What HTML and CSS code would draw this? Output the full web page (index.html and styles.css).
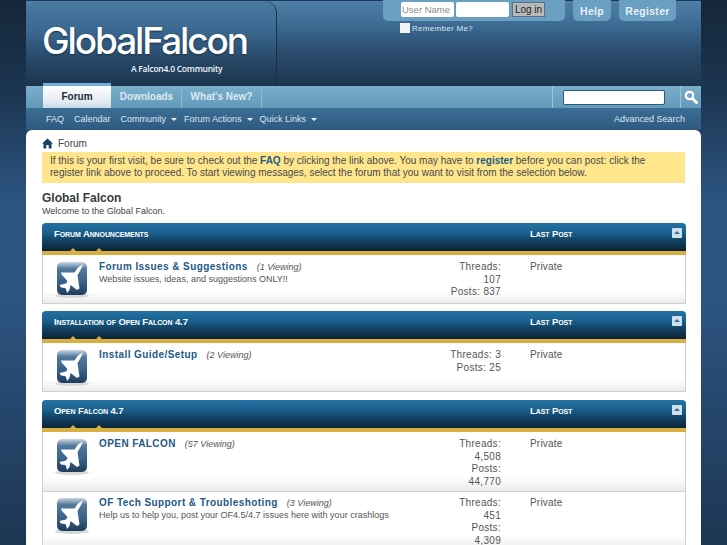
FILE: index.html
```html
<!DOCTYPE html>
<html lang="en">
<head>
    <meta charset="UTF-8">
    <title>Global Falcon</title>
    <link rel="stylesheet" href="styles.css">
</head>
<body>

<svg class="sprites" width="0" height="0">
    <defs>
        <linearGradient id="iconFill" x1="0" y1="0" x2="0" y2="1">
            <stop offset="0" stop-color="#c9d6e2"/>
            <stop offset="0.2" stop-color="#55799c"/>
            <stop offset="0.6" stop-color="#3a6288"/>
            <stop offset="1" stop-color="#1d3c5c"/>
        </linearGradient>
        <symbol id="planeIcon" viewBox="0 0 36 42">
            <ellipse cx="18" cy="37.500" rx="17" ry="2.500" fill="#d8d8d8"/>
            <rect x="3" y="4" width="30" height="33" rx="5" fill="url(#iconFill)"/>
            <path d="M29 6.500 L24 9.500 L20.500 14.500 L7 14.500 L8 17 L13.500 23 L12 25.500 L5.500 27 L7 29.500 L11 30 L12 31 L13 35 L15.500 32 L16.500 27 L23 32 L25.500 30.500 L23.500 17 L26.500 12 Z" fill="#fff"/>
        </symbol>
    </defs>
</svg>

<div class="wrapper">
    <!-- Kopf -->
    <div class="header">
        <div class="logo">
            <div class="logo-name">GlobalFalcon</div>
            <div class="logo-tag">A Falcon4.0 Community</div>
        </div>
        <div class="toplinks">
            <div class="login-box">
                <form class="login-row">
                    <input type="text" class="login-input" placeholder="User Name">
                    <input type="text" class="login-input">
                    <button type="button" class="login-btn">Log in</button>
                </form>
                <label class="remember"><span class="check"></span>Remember Me?</label>
            </div>
            <a class="top-btn top-help">Help</a>
            <a class="top-btn top-register">Register</a>
        </div>
    </div>

    <!-- Navigation -->
    <div class="navbar">
        <ul class="tabs">
            <li class="tab active">Forum</li>
            <li class="tab">Downloads</li>
            <li class="tab">What's New?</li>
        </ul>
        <div class="search">
            <input type="text" class="search-input">
            <div class="search-btn">
                <svg width="14" height="14" viewBox="0 0 14 14">
                    <circle cx="5.500" cy="5.500" r="3.700" fill="none" stroke="#fff" stroke-width="2.200"/>
                    <path d="M8.500 8.500 L12.500 12.500" stroke="#fff" stroke-width="3" stroke-linecap="round"/>
                </svg>
            </div>
        </div>
    </div>
    <div class="subnav">
        <ul class="sublinks">
            <li>FAQ</li>
            <li>Calendar</li>
            <li class="drop">Community</li>
            <li class="drop">Forum Actions</li>
            <li class="drop">Quick Links</li>
        </ul>
        <a class="adv-search">Advanced Search</a>
    </div>

    <!-- Inhalt -->
    <div class="content">
        <div class="breadcrumb">
            <svg width="11" height="11" viewBox="0 0 11 11">
                <path d="M5.500 0.500 L11 5.500 L9.500 5.500 L9.500 10.500 L6.700 10.500 L6.700 7 L4.300 7 L4.300 10.500 L1.500 10.500 L1.500 5.500 L0 5.500 Z" fill="#1f3f5f"/>
            </svg>
            <span>Forum</span>
        </div>
        <div class="notice">
            If this is your first visit, be sure to check out the <b>FAQ</b> by clicking the link above. You may have to <b>register</b> before you can post: click the register link above to proceed. To start viewing messages, select the forum that you want to visit from the selection below.
        </div>
        <h1 class="site-title">Global Falcon</h1>
        <p class="site-desc">Welcome to the Global Falcon.</p>

        <div class="block">
            <div class="block-head">
                <span class="head-title">Forum Announcements</span>
                <span class="head-last">Last Post</span>
                <span class="collapse"></span>
            </div>
            <div class="forum-row">
                <svg class="forum-icon"><use href="#planeIcon"/></svg>
                <div class="forum-info">
                    <div><a class="forum-name">Forum Issues &amp; Suggestions</a><em class="viewing">(1 Viewing)</em></div>
                    <p class="forum-desc">Website issues, ideas, and suggestions ONLY!!</p>
                </div>
                <div class="forum-stats">Threads: 107<br>Posts: 837</div>
                <div class="forum-last">Private</div>
            </div>
        </div>

        <div class="block">
            <div class="block-head">
                <span class="head-title">Installation of Open Falcon 4.7</span>
                <span class="head-last">Last Post</span>
                <span class="collapse"></span>
            </div>
            <div class="forum-row">
                <svg class="forum-icon"><use href="#planeIcon"/></svg>
                <div class="forum-info">
                    <div><a class="forum-name">Install Guide/Setup</a><em class="viewing">(2 Viewing)</em></div>
                </div>
                <div class="forum-stats">Threads: 3<br>Posts: 25</div>
                <div class="forum-last">Private</div>
            </div>
        </div>

        <div class="block">
            <div class="block-head">
                <span class="head-title">Open Falcon 4.7</span>
                <span class="head-last">Last Post</span>
                <span class="collapse"></span>
            </div>
            <div class="forum-row">
                <svg class="forum-icon"><use href="#planeIcon"/></svg>
                <div class="forum-info">
                    <div><a class="forum-name">OPEN FALCON</a><em class="viewing">(57 Viewing)</em></div>
                </div>
                <div class="forum-stats">Threads: 4,508<br>Posts: 44,770</div>
                <div class="forum-last">Private</div>
            </div>
            <div class="forum-row">
                <svg class="forum-icon"><use href="#planeIcon"/></svg>
                <div class="forum-info">
                    <div><a class="forum-name">OF Tech Support &amp; Troubleshoting</a><em class="viewing">(3 Viewing)</em></div>
                    <p class="forum-desc">Help us to help you, post your OF4.5/4.7 issues here with your crashlogs</p>
                </div>
                <div class="forum-stats">Threads: 451<br>Posts: 4,309</div>
                <div class="forum-last">Private</div>
            </div>
        </div>
    </div>
</div>

</body>
</html>
```

FILE: styles.css
```css
html, body {
    height: 100%;
    overflow: hidden;
}
body {
    margin: 0;
    padding: 0;
    font-family: 'Liberation Sans', Arial, sans-serif;
    font-size: 10px;
    color: #4a4a4a;
    background: linear-gradient(to bottom, #14263a 0, #1c3550 90px, #2c5481 200px, #2c5481 300px, #1d3652 545px);
}
ul {
    list-style: none;
    margin: 0;
    padding: 0;
}
.sprites {
    position: absolute;
}
.wrapper {
    width: 675px;
    margin-left: 26px;
}

/* Kopf */
.header {
    height: 86px;
    box-sizing: border-box;
    display: flex;
    border-top: 1px solid #1c3a58;
    background: linear-gradient(to bottom, #4f7ea8 0, #3c6a92 25px, #2a4c6e 50px, #1d3650 85px);
}
.logo {
    width: 251px;
    height: 85px;
    box-sizing: border-box;
    padding: 21px 0 0 16px;
    border-radius: 12px 12px 0 0;
    border-right: 1px solid #1a2f45;
    background: linear-gradient(to bottom, #4a7aa3 0, #3b6890 30px, #264766 60px, #1c344e 85px);
}
.logo-name {
    font-family: Inter, sans-serif;
    font-weight: 500;
    font-size: 37px;
    line-height: 38px;
    letter-spacing: -2.100px;
    white-space: nowrap;
    color: #fff;
    text-shadow: 0 1px 2px #1a3048;
}
.logo-tag {
    margin: 3px 0 0 89px;
    font-family: 'Open Sans', sans-serif;
    font-weight: 600;
    font-size: 8.500px;
    line-height: 12px;
    letter-spacing: -0.25px;
    white-space: nowrap;
    color: #f2f6fa;
}
.toplinks {
    display: flex;
    align-items: flex-start;
    margin-left: 106px;
    margin-top: -1px;
}
.login-box {
    position: relative;
    width: 182px;
    height: 21px;
    background: #6a9fc2;
    border-radius: 0 0 5px 5px;
}
.login-row {
    display: flex;
    padding: 2px 0 0 18px;
    margin: 0;
}
.login-input {
    width: 53px;
    height: 15px;
    box-sizing: border-box;
    margin: 0 2px 0 0;
    padding: 0 1px;
    border: 0;
    border-radius: 2px;
    background: #fff;
    font-family: 'Liberation Sans', Arial, sans-serif;
    font-size: 9.500px;
}
.login-input::placeholder {
    color: #8a8a8a;
}
.login-btn {
    width: 33px;
    height: 15px;
    margin-left: 1px;
    padding: 0;
    border: 1px solid #55718a;
    background: #b9b9b9;
    font-family: 'Liberation Sans', Arial, sans-serif;
    font-size: 10px;
    color: #222;
}
.remember {
    position: absolute;
    left: 17px;
    top: 23px;
    display: flex;
    align-items: center;
    font-size: 8px;
    letter-spacing: 0.3px;
    color: #dbe6ef;
    white-space: nowrap;
}
.check {
    width: 10px;
    height: 10px;
    margin-right: 2px;
    background: #f2f2f2;
}
.top-btn {
    height: 21px;
    box-sizing: border-box;
    padding-top: 5px;
    background: #6a9fc2;
    border-radius: 0 0 5px 5px;
    font-size: 10.500px;
    font-weight: bold;
    letter-spacing: 0.3px;
    text-align: center;
    color: #e8f0f6;
}
.top-help {
    width: 38px;
    margin-left: 8px;
}
.top-register {
    width: 57px;
    margin-left: 8px;
}

/* Navigation */
.navbar {
    height: 22px;
    display: flex;
    justify-content: space-between;
    background: linear-gradient(to bottom, #7aaecb, #639ab9);
}
.tabs {
    display: flex;
    margin-left: 17px;
}
.tab {
    box-sizing: border-box;
    height: 22px;
    padding-top: 5px;
    border-right: 1px solid #8fbad2;
    font-size: 10px;
    font-weight: bold;
    text-align: center;
    color: #dde9f1;
}
.tab:nth-child(2) {
    width: 70px;
}
.tab:nth-child(3) {
    width: 80px;
}
.tab.active {
    position: relative;
    width: 68px;
    height: 25px;
    margin-top: -3px;
    padding-top: 5px;
    border-top: 3px solid #6fb0d8;
    border-right: 0;
    margin-right: 1px;
    background: linear-gradient(to bottom, #ffffff, #e4ebf0 70%, #c5dbe8);
    color: #1c2b3a;
}
.search {
    display: flex;
    align-items: center;
    width: 149px;
    border-left: 1px solid #a0c4d8;
    box-sizing: border-box;
    padding-left: 10px;
}
.search-input {
    width: 102px;
    height: 15px;
    box-sizing: border-box;
    margin: 0;
    padding: 0;
    border: 1px solid #2f5a80;
    border-radius: 2px;
    background: #fff;
}
.search-btn {
    display: flex;
    align-items: center;
    justify-content: center;
    width: 21px;
    height: 22px;
    margin-left: 15px;
    border-left: 1px solid #a0c4d8;
}
.subnav {
    height: 22px;
    box-sizing: border-box;
    padding-bottom: 1px;
    display: flex;
    justify-content: space-between;
    align-items: center;
    background: linear-gradient(to bottom, #3b6d95, #2e5a80);
    color: #dce7ef;
    font-size: 9px;
}
.sublinks {
    display: flex;
    gap: 10px;
    margin-left: 20px;
}
.drop {
    margin-right: -3px;
}
.drop::after {
    content: "";
    display: inline-block;
    margin-left: 5px;
    vertical-align: 1px;
    border: 3px solid transparent;
    border-top: 3px solid #e8eff5;
    border-bottom: 0;
}
.adv-search {
    margin-right: 16px;
}

/* Inhalt */
.content {
    background: #fff;
    border-radius: 6px 6px 0 0;
    padding: 6px 15px 0 16px;
}
.breadcrumb {
    display: flex;
    align-items: center;
    gap: 5px;
    height: 15px;
    color: #444;
}
.notice {
    margin: 1px 1px 0 0;
    padding: 3px 8px 4px 8px;
    background: #ffe58c;
    line-height: 12px;
    color: #4a4a4a;
}
.notice b {
    color: #1d5a85;
}
.site-title {
    margin: 8px 0 0 0;
    font-size: 12px;
    line-height: 14px;
    color: #3a3a3a;
}
.site-desc {
    margin: 0 0 6px 0;
    font-size: 9px;
    line-height: 12px;
    color: #444;
}
.block {
    margin-bottom: 7px;
    border: 1px solid #cfcfcf;
    border-top: 0;
    border-radius: 4px 4px 0 0;
}
.block + .block {
    margin-bottom: 8px;
}
.block-head {
    position: relative;
    height: 32px;
    box-sizing: border-box;
    margin: 0 -1px;
    border-radius: 4px 4px 0 0;
    border-bottom: 4px solid #d9ae45;
    background: linear-gradient(to bottom, #2273a5 0, #1a5f8c 10px, #103a58 20px, #0c2436 28px);
    color: #fff;
}
.block-head::before,
.block-head::after {
    content: "";
    position: absolute;
    bottom: 0;
    border: 3px solid transparent;
    border-bottom: 3px solid #d9ae45;
    border-top: 0;
}
.block-head::before {
    left: 28px;
}
.block-head::after {
    left: 54px;
}
.head-title,
.head-last {
    position: absolute;
    top: 5px;
    font-size: 9.500px;
    line-height: 12px;
    font-weight: bold;
    font-variant: small-caps;
    letter-spacing: -0.1px;
}
.head-title {
    left: 12px;
}
.head-last {
    left: 488px;
}
.collapse {
    position: absolute;
    right: 4px;
    top: 5px;
    width: 10px;
    height: 10px;
    background: #cfe2ee;
    border-radius: 1px;
}
.collapse::after {
    content: "";
    position: absolute;
    left: 2px;
    top: 3px;
    border: 3px solid transparent;
    border-bottom: 3px solid #2f6f9b;
    border-top: 0;
}
.forum-row {
    display: flex;
    align-items: flex-start;
    min-height: 48px;
    box-sizing: border-box;
    padding: 6px 0 3px 0;
    background: linear-gradient(to bottom, #fff 75%, #ececec);
}
.forum-row + .forum-row {
    padding-top: 5px;
    border-top: 1px solid #cfcfcf;
}
.forum-icon {
    width: 36px;
    height: 42px;
    flex: none;
    margin: -3px 9px -1px 11px;
}
.forum-info {
    width: 346px;
    flex: none;
}
.forum-name {
    font-size: 10px;
    font-weight: bold;
    letter-spacing: 0.42px;
    color: #1f5a85;
}
.viewing {
    margin-left: 9px;
    font-size: 9px;
    color: #555;
}
.forum-desc {
    margin: 1px 0 0 0;
    font-size: 9px;
    line-height: 12px;
    color: #555;
}
.forum-stats {
    width: 56px;
    flex: none;
    line-height: 12.500px;
    text-align: right;
    letter-spacing: 0.3px;
    color: #555;
}
.forum-last {
    margin-left: 29px;
    color: #555;
    letter-spacing: 0.2px;
}
```
